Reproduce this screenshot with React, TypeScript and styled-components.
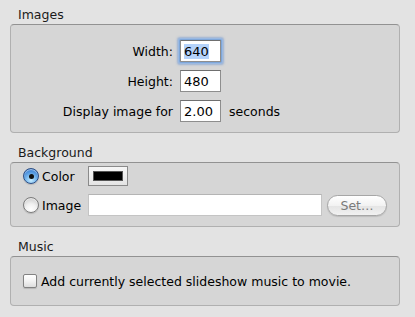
import React from 'react';
import styled, { createGlobalStyle } from 'styled-components';

const GlobalStyle = createGlobalStyle`
  html, body {
    margin: 0;
    padding: 0;
    background: #e3e3e3;
  }
  body {
    font-family: "DejaVu Sans", "Liberation Sans", sans-serif;
    font-size: 12.5px;
    color: #000;
  }
`;

const Page = styled.div`
  width: 415px;
  height: 317px;
  box-sizing: border-box;
  padding: 6px 15px 0 10px;
  display: flex;
  flex-direction: column;
  gap: 11px;
`;

const Section = styled.section`
  display: flex;
  flex-direction: column;
`;

const Title = styled.div`
  height: 18px;
  line-height: 18px;
  padding-left: 8px;
  color: #1a1a1a;
`;

const Box = styled.div<{ $pad: string; $gap?: number }>`
  border: 1px solid #b0b0b0;
  border-top-color: #929292;
  border-radius: 4px;
  background: #d6d6d6;
  padding: ${(p) => p.$pad};
  display: flex;
  flex-direction: column;
  gap: ${(p) => p.$gap ?? 8}px;
`;

const FormRow = styled.div`
  display: flex;
  align-items: center;
  height: 22px;
`;

const FieldLabel = styled.span`
  width: 162px;
  margin-right: 7px;
  text-align: right;
  white-space: nowrap;
`;

const TextInput = styled.div<{ $width: number; $focused?: boolean; $disabled?: boolean }>`
  width: ${(p) => p.$width}px;
  height: 22px;
  box-sizing: border-box;
  background: #fff;
  border: 1px solid ${(p) => (p.$disabled ? '#c4c4c4' : '#8e8e8e')};
  border-top-color: ${(p) => (p.$disabled ? '#b4b4b4' : '#6f6f6f')};
  padding: 2px 2px 0 3px;
  line-height: 17px;
  font-size: 13px;
  box-shadow: ${(p) =>
    p.$focused ? '0 0 0 1px #7ea6d9, 0 0 0 2px #9ab9e2, 0 0 2px 3px rgba(110,150,210,0.55)' : 'none'};
  border-radius: ${(p) => (p.$focused ? '1px' : '0')};
`;

const Selection = styled.span`
  background: #b5d3fb;
`;

const Unit = styled.span`
  margin-left: 8px;
`;

const ChoiceRow = styled.div<{ $height: number }>`
  display: flex;
  align-items: center;
  height: ${(p) => p.$height}px;
`;

const RadioLabel = styled.label`
  width: 77px;
  box-sizing: border-box;
  padding-left: 12px;
  display: flex;
  align-items: center;
  gap: 3px;
`;

const Radio = styled.span<{ $checked?: boolean }>`
  width: 16px;
  height: 16px;
  box-sizing: border-box;
  border-radius: 50%;
  border: 1px solid ${(p) => (p.$checked ? '#2c4f86' : '#7c7c7c')};
  background: ${(p) =>
    p.$checked
      ? 'radial-gradient(circle at 50% 80%, #c6ecff 0%, #7fbdf0 35%, #3d84d6 75%, #2a64b4 100%)'
      : 'radial-gradient(circle at 50% 80%, #ffffff 0%, #f1f1f1 40%, #d2d2d2 80%, #b9b9b9 100%)'};
  box-shadow: inset 0 1px 1px rgba(255, 255, 255, 0.6), 0 1px 1px rgba(0, 0, 0, 0.15);
  display: flex;
  align-items: center;
  justify-content: center;
  &::after {
    content: '';
    width: 5px;
    height: 5px;
    border-radius: 50%;
    background: #111;
    display: ${(p) => (p.$checked ? 'block' : 'none')};
  }
`;

const ColorWell = styled.div`
  width: 40px;
  height: 20px;
  box-sizing: border-box;
  border: 1px solid #8a8a8a;
  background: linear-gradient(#f6f6f6, #e4e4e4);
  padding: 4px;
`;

const Swatch = styled.div<{ $color: string }>`
  width: 100%;
  height: 100%;
  background: ${(p) => p.$color};
  border: 1px solid #555;
  box-sizing: border-box;
`;

const PillButton = styled.button`
  margin-left: 5px;
  width: 60px;
  height: 21px;
  border-radius: 11px;
  border: 1px solid #a6a6a6;
  background: linear-gradient(#ffffff 0%, #f2f2f2 50%, #e4e4e4 51%, #f1f1f1 100%);
  color: #7a7a7a;
  font-family: inherit;
  font-size: 12.5px;
  padding: 0;
  box-shadow: 0 1px 1px rgba(0, 0, 0, 0.12);
`;

const CheckRow = styled.label`
  display: flex;
  align-items: center;
  gap: 4px;
  height: 48px;
  padding-left: 12px;
`;

const CheckBox = styled.span`
  width: 14px;
  height: 14px;
  box-sizing: border-box;
  border: 1px solid #828282;
  border-radius: 2px;
  background: linear-gradient(#ffffff 0%, #f3f3f3 50%, #dedede 100%);
  box-shadow: 0 1px 1px rgba(0, 0, 0, 0.15);
`;

const sizes = [
  { label: 'Width:', value: '640', focused: true },
  { label: 'Height:', value: '480' },
  { label: 'Display image for', value: '2.00', unit: 'seconds' },
];

export default function App() {
  return (
    <>
      <GlobalStyle />
      <Page>
        <Section>
          <Title>Images</Title>
          <Box $pad="15px 0 10px 0">
            {sizes.map((s) => (
              <FormRow key={s.label}>
                <FieldLabel>{s.label}</FieldLabel>
                <TextInput $width={41} $focused={s.focused}>
                  {s.focused ? <Selection>{s.value}</Selection> : s.value}
                </TextInput>
                {s.unit && <Unit>{s.unit}</Unit>}
              </FormRow>
            ))}
          </Box>
        </Section>

        <Section>
          <Title>Background</Title>
          <Box $pad="3px 11px 10px 0">
            <ChoiceRow $height={20}>
              <RadioLabel>
                <Radio $checked />
                Color
              </RadioLabel>
              <ColorWell>
                <Swatch $color="#000" />
              </ColorWell>
            </ChoiceRow>
            <ChoiceRow $height={22}>
              <RadioLabel>
                <Radio />
                Image
              </RadioLabel>
              <TextInput $width={234} $disabled />
              <PillButton disabled>Set…</PillButton>
            </ChoiceRow>
          </Box>
        </Section>

        <Section>
          <Title>Music</Title>
          <Box $pad="0" $gap={0}>
            <CheckRow>
              <CheckBox />
              Add currently selected slideshow music to movie.
            </CheckRow>
          </Box>
        </Section>
      </Page>
    </>
  );
}
